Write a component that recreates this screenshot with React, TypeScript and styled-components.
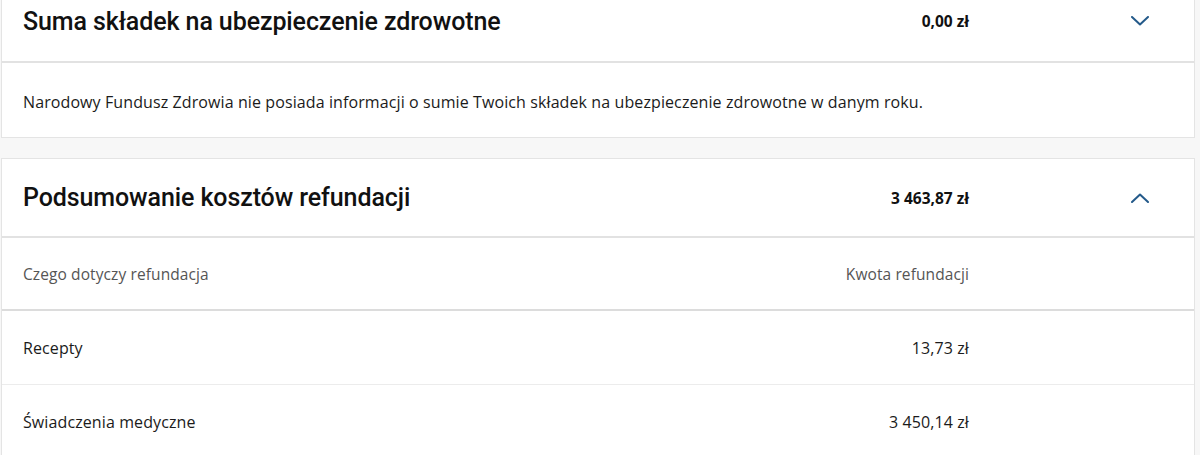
import React from 'react';
import styled, { createGlobalStyle } from 'styled-components';

const GlobalStyle = createGlobalStyle`
  body {
    margin: 0;
    background: #f7f7f7;
    font-family: "Open Sans", "Liberation Sans", sans-serif;
    color: #1b1b1b;
  }
`;

const Page = styled.div`
  margin-top: -20px;
  padding: 0 5px 0 1px;
  display: flex;
  flex-direction: column;
  gap: 20px;
`;

const Card = styled.section`
  background: #fff;
  border: 1px solid #e4e4e4;
`;

const Header = styled.div<{ $height: number }>`
  display: grid;
  grid-template-columns: 1fr auto 225px;
  align-items: center;
  height: ${p => p.$height}px;
  padding-left: 21px;
  border-bottom: 2px solid #e2e2e2;
`;

const Title = styled.h2`
  margin: 0;
  font-family: "Roboto", "Noto Sans", sans-serif;
  font-weight: 500;
  font-size: 25px;
  letter-spacing: -0.1px;
  color: #111;
`;

const Total = styled.span`
  font-size: 15.5px;
  font-weight: 700;
  color: #111;
`;

const Toggle = styled.button`
  justify-self: start;
  margin-left: 162px;
  border: 0;
  background: none;
  padding: 0;
  display: flex;
  color: #245a8a;
`;

const Note = styled.p`
  margin: 0;
  padding: 28px 21px 24px;
  font-size: 16px;
  letter-spacing: 0.1px;
  line-height: 22px;
`;

const Row = styled.div<{ $head?: boolean }>`
  display: grid;
  grid-template-columns: 1fr auto 225px;
  align-items: center;
  height: ${p => (p.$head ? 71 : 73)}px;
  padding-left: 21px;
  font-size: ${p => (p.$head ? 15.5 : 16)}px;
  letter-spacing: 0.1px;
  color: ${p => (p.$head ? '#555' : '#1b1b1b')};
  border-bottom: ${p => (p.$head ? '2px solid #dcdcdc' : '1px solid #ececec')};
  &:last-child { border-bottom: 0; }
`;

function Chevron({ up }: { up?: boolean }) {
  return (
    <svg width="18" height="10" viewBox="0 0 18 10" fill="none">
      <path
        d={up ? 'M1 9L9 1.5L17 9' : 'M1 1L9 8.5L17 1'}
        stroke="currentColor"
        strokeWidth="2"
        strokeLinecap="round"
        strokeLinejoin="round"
      />
    </svg>
  );
}

const rows = [
  { label: 'Recepty', value: '13,73 zł' },
  { label: 'Świadczenia medyczne', value: '3 450,14 zł' },
];

export default function App() {
  return (
    <Page>
      <GlobalStyle />
      <Card>
        <Header $height={80}>
          <Title>Suma składek na ubezpieczenie zdrowotne</Title>
          <Total>0,00 zł</Total>
          <Toggle aria-label="Rozwiń"><Chevron /></Toggle>
        </Header>
        <Note>
          Narodowy Fundusz Zdrowia nie posiada informacji o sumie Twoich składek na ubezpieczenie zdrowotne w danym roku.
        </Note>
      </Card>
      <Card>
        <Header $height={77}>
          <Title>Podsumowanie kosztów refundacji</Title>
          <Total>3 463,87 zł</Total>
          <Toggle aria-label="Zwiń"><Chevron up /></Toggle>
        </Header>
        <Row $head>
          <span>Czego dotyczy refundacja</span>
          <span>Kwota refundacji</span>
          <span />
        </Row>
        {rows.map(r => (
          <Row key={r.label}>
            <span>{r.label}</span>
            <span>{r.value}</span>
            <span />
          </Row>
        ))}
      </Card>
    </Page>
  );
}
